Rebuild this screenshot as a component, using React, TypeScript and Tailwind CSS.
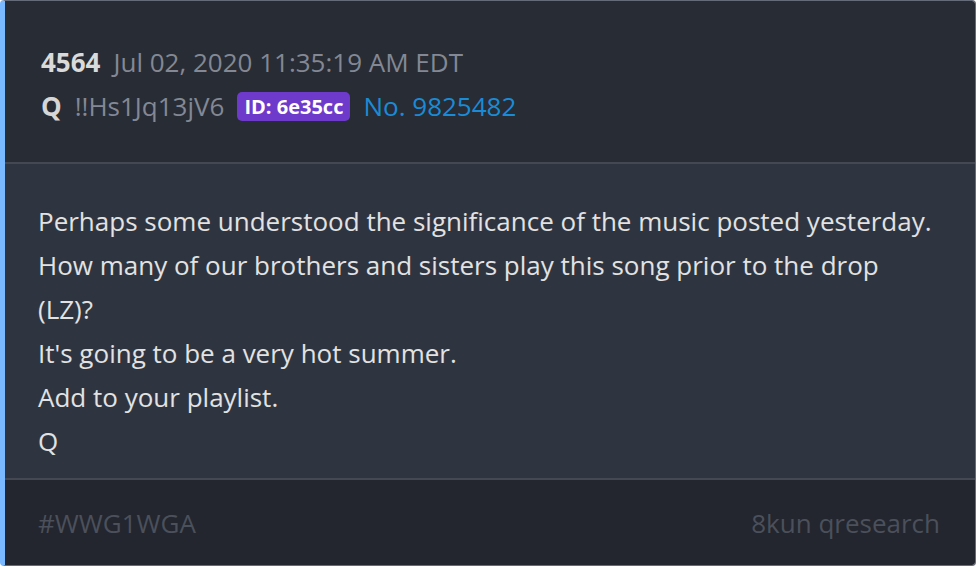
import React from 'react';

const post = {
  num: '4564',
  date: 'Jul 02, 2020 11:35:19 AM EDT',
  name: 'Q',
  trip: '!!Hs1Jq13jV6',
  id: '6e35cc',
  no: '9825482',
  lines: [
    'Perhaps some understood the significance of the music posted yesterday.',
    'How many of our brothers and sisters play this song prior to the drop (LZ)?',
    "It's going to be a very hot summer.",
    'Add to your playlist.',
    'Q',
  ],
  tag: '#WWG1WGA',
  source: '8kun qresearch',
};

export default function App() {
  return (
    <div className="w-full min-h-screen bg-white" style={{ fontFamily: '"Open Sans", "Noto Sans", sans-serif' }}>
      <div className="h-[566px] flex flex-col overflow-hidden rounded-[4px] border border-[#656b78] border-l-[5px] border-l-[#7ab8ff]">
        {/* header */}
        <div className="bg-[#282c35] pl-[36px] pr-[35px] pt-[39px] pb-[34px] text-[26px] leading-[44px]">
          <div className="flex items-center gap-[13px]">
            <span className="font-bold text-[#dadada]">{post.num}</span>
            <span className="text-[#838894]">{post.date}</span>
          </div>
          <div className="flex items-center gap-[13px]">
            <span className="font-bold text-[#d6d6d6]">{post.name}</span>
            <span className="text-[#838894]">{post.trip}</span>
            <span className="h-[29px] px-[7px] rounded-[5px] bg-[#6e3acb] text-white font-bold text-[20px] leading-[29px]">
              ID: {post.id}
            </span>
            <span className="text-[#1a8bd6]">No. {post.no}</span>
          </div>
        </div>

        {/* body */}
        <div className="flex-1 bg-[#2f3540] border-t-2 border-[#434853] pl-[33px] pr-[38px] pt-[35px] pb-[15px] text-[26px] leading-[44px] text-[#e2e2e2]">
          {post.lines.map((l, i) => (
            <p key={i}>{l}</p>
          ))}
        </div>

        {/* footer */}
        <div className="bg-[#23262e] border-t-2 border-[#434853] pl-[33px] pr-[35px] pt-[21px] pb-[21px] flex justify-between text-[26px] leading-[44px] text-[#4b505b]">
          <span>{post.tag}</span>
          <span>{post.source}</span>
        </div>
      </div>
    </div>
  );
}
